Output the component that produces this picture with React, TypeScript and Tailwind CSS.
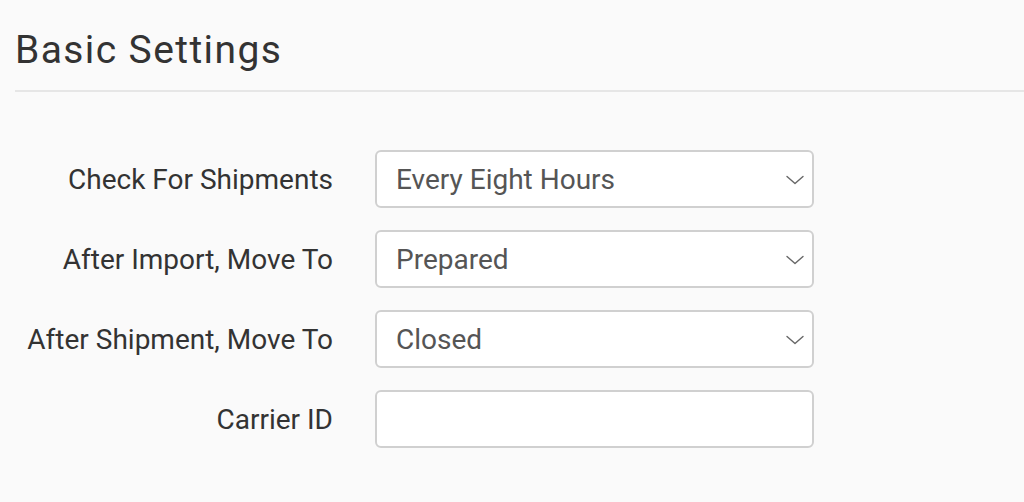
const rows = [
  { label: "Check For Shipments", value: "Every Eight Hours", select: true },
  { label: "After Import, Move To", value: "Prepared", select: true },
  { label: "After Shipment, Move To", value: "Closed", select: true },
  { label: "Carrier ID", value: "", select: false },
]

export default function App() {
  return (
    <div className="min-h-[502px] bg-[#fafafa] px-[15px] pt-[26px] font-['Roboto',sans-serif]">
      <h2 className="text-[39px] leading-[48px] font-normal tracking-[1.4px] text-[#333]">Basic Settings</h2>
      <div className="mt-[16px] -mr-[15px] h-[2px] bg-[#e6e6e6]" />

      <div className="mt-[58px] flex flex-col gap-[22px]">
        {rows.map((r) => (
          <div key={r.label} className="flex items-center">
            <label className="w-[318px] whitespace-nowrap pt-[2px] text-right text-[28px] text-[#333]">{r.label}</label>
            <div className="ml-[42px] flex h-[58px] w-[439px] items-center justify-between rounded-[6px] border-2 border-[#d0d0d0] bg-white pl-[19px] pr-[8px] text-[28px] text-[#555]">
              <span className="pt-[2px]">{r.value}</span>
              {r.select && (
                <svg width="18" height="10" viewBox="0 0 18 10" fill="none" className="mt-[1px]">
                  <path d="M1 1.5 L9 8.5 L17 1.5" stroke="#666" strokeWidth="1.4" strokeLinecap="round" strokeLinejoin="round" />
                </svg>
              )}
            </div>
          </div>
        ))}
      </div>
    </div>
  )
}
